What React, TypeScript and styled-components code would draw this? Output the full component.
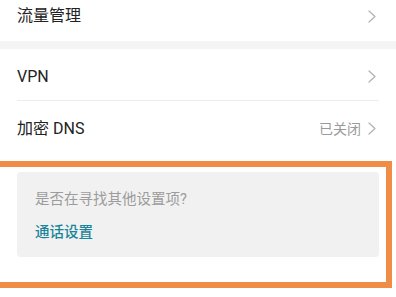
import React from "react";
import styled, { createGlobalStyle } from "styled-components";

const Global = createGlobalStyle`
  html, body { margin: 0; padding: 0; background: #ffffff; }
  body { font-family: Roboto, "Noto Sans CJK SC", sans-serif; }
`;

const Page = styled.div`
  width: 396px;
  height: 297px;
  overflow: hidden;
  background: #ffffff;
  display: flex;
  flex-direction: column;
`;

const Row = styled.div<{ $h: number; $pt?: number; $pb?: number }>`
  height: ${(p) => p.$h}px;
  box-sizing: border-box;
  padding: ${(p) => p.$pt ?? 0}px 20px ${(p) => p.$pb ?? 0}px 17px;
  display: flex;
  align-items: center;
  justify-content: space-between;
`;

const Label = styled.span`
  font-size: 16px;
  color: #222222;
  line-height: 20px;
`;

const Right = styled.span`
  display: flex;
  align-items: center;
  gap: 7px;
`;

const Value = styled.span`
  font-size: 14px;
  color: #9a9a9a;
  line-height: 18px;
`;

const Band = styled.div`
  height: 8px;
  background: #f4f4f4;
`;

const Divider = styled.div`
  height: 1px;
  margin: 0 17px;
  background: #ececec;
`;

const Section = styled.div`
  position: relative;
  padding: 16px 17px 0 17px;
`;

const Card = styled.div`
  background: #f1f1f1;
  border-radius: 4px;
  padding: 18px 18px 14px 18px;
  display: flex;
  flex-direction: column;
  gap: 13px;
`;

const Prompt = styled.span`
  font-size: 14.5px;
  line-height: 20px;
  color: #9c9c9c;
`;

const Link = styled.span`
  font-size: 14.5px;
  line-height: 20px;
  color: #1a8599;
  font-weight: 500;
`;

const Highlight = styled.div`
  position: absolute;
  top: 5px;
  left: -6px;
  right: 4px;
  height: 127px;
  border: 6px solid #ef8d46;
  box-sizing: border-box;
  pointer-events: none;
`;

const Chevron = () => (
  <svg width="8" height="13" viewBox="0 0 8 13">
    <polyline
      points="1,1 7,6.5 1,12"
      fill="none"
      stroke="#b3b3b3"
      strokeWidth="1.3"
      strokeLinecap="round"
      strokeLinejoin="round"
    />
  </svg>
);

export default function App() {
  return (
    <Page>
      <Global />
      <Row $h={41} $pb={9}>
        <Label>流量管理</Label>
        <Right>
          <Chevron />
        </Right>
      </Row>
      <Band />
      <Row $h={51} $pt={4}>
        <Label>VPN</Label>
        <Right>
          <Chevron />
        </Right>
      </Row>
      <Divider />
      <Row $h={55}>
        <Label>加密 DNS</Label>
        <Right>
          <Value>已关闭</Value>
          <Chevron />
        </Right>
      </Row>
      <Section>
        <Card>
          <Prompt>是否在寻找其他设置项?</Prompt>
          <Link>通话设置</Link>
        </Card>
        <Highlight />
      </Section>
    </Page>
  );
}
